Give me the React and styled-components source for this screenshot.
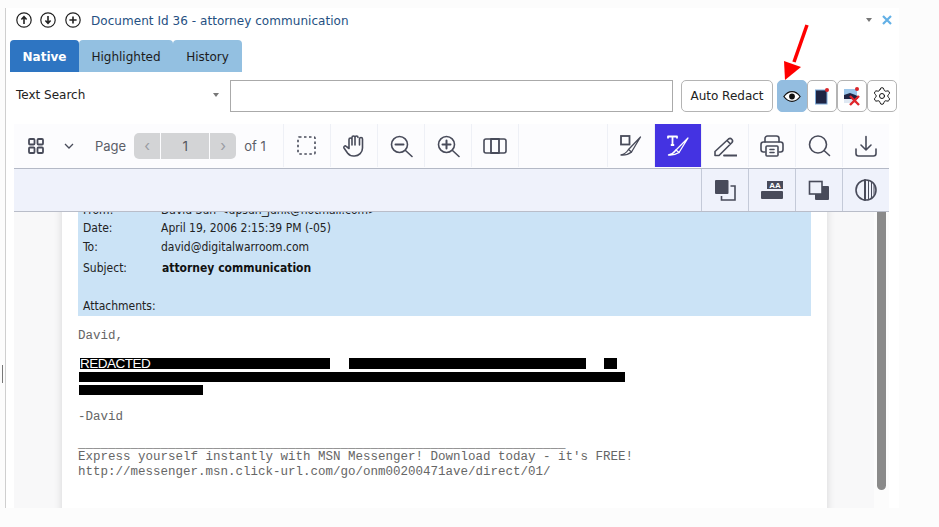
import React from "react";
import styled, { createGlobalStyle } from "styled-components";
import { Settings } from "lucide-react";

const GlobalStyle = createGlobalStyle`
  html, body {
    margin: 0;
    padding: 0;
    background: #fcfcfc;
    overflow: hidden;
  }
  * {
    box-sizing: border-box;
  }
`;

const INK = "#484b5a";

//Small helper so every toolbar glyph shares one grid
const Glyph = ({ color = INK, children }) => (
  <svg width="24" height="24" viewBox="0 0 24 24" fill="none" stroke={color} strokeWidth="1.6" strokeLinecap="round" strokeLinejoin="round">
    {children}
  </svg>
);

const RoundIcon = ({ d }) => (
  <svg width="16" height="16" viewBox="0 0 16 16" fill="none" stroke="#222" strokeWidth="1.2">
    <circle cx="8" cy="8" r="7.2" />
    <path d={d} strokeWidth="1.6" />
  </svg>
);

function App() {
  return (
    <>
      <GlobalStyle />
      <Page>
        <Handle />
        <Panel>
          <Header>
            <RoundIcons>
              <RoundIcon d="M8 12V5M5.4 7.6 8 4.6l2.6 3" />
              <RoundIcon d="M8 4v7M5.4 8.4 8 11.4l2.6-3" />
              <RoundIcon d="M8 4.4v7.2M4.4 8h7.2" />
            </RoundIcons>
            <Title>Document Id 36 - attorney communication</Title>
            <HeaderActions>
              <Caret />
              <svg width="10" height="10" viewBox="0 0 10 10" stroke="#62b0e6" strokeWidth="2.2">
                <path d="M1 1l8 8M9 1l-8 8" />
              </svg>
            </HeaderActions>
          </Header>

          <Tabs>
            <Tab $active $width={69}>Native</Tab>
            <Tab $width={94}>Highlighted</Tab>
            <Tab $width={69}>History</Tab>
          </Tabs>

          <SearchRow>
            <SearchSelect>
              Text Search
              <Caret />
            </SearchSelect>
            <SearchInput />
            <AutoRedact>Auto Redact</AutoRedact>
            <IconButton $active>
              <svg width="18" height="13" viewBox="0 0 20 14">
                <path d="M1 7c2.500-3.600 5.600-5.400 9-5.400S16.500 3.400 19 7c-2.500 3.600-5.600 5.400-9 5.400S3.500 10.600 1 7Z" fill="#fff" stroke="#111" strokeWidth="1.4" />
                <circle cx="10" cy="7" r="3.200" fill="#111" />
              </svg>
            </IconButton>
            <IconButton>
              <svg width="18" height="18" viewBox="0 0 18 18">
                <rect x="2.500" y="3" width="11.500" height="14" fill="#1f2544" stroke="#7da9d6" />
                <circle cx="14" cy="3" r="2" fill="#d9252a" />
              </svg>
            </IconButton>
            <IconButton>
              <svg width="20" height="20" viewBox="0 0 20 20">
                <rect x="2" y="3" width="13" height="6" fill="#9cc6ea" />
                <path d="M2 9l6-2 8 3v3H2Z" fill="#1f2544" />
                <rect x="2" y="13" width="13" height="4" fill="#dfe8f2" />
                <circle cx="15" cy="3" r="2" fill="#d9252a" />
                <path d="M8 10l9 9M17 10l-9 9" stroke="#e0262b" strokeWidth="2.400" />
              </svg>
            </IconButton>
            <IconButton>
              <Settings size={20} strokeWidth={1.2} color="#111" />
            </IconButton>
          </SearchRow>

          <Viewer>
            <Toolbar>
              <PagerGroup>
                <GridIcon viewBox="0 0 16 16" fill="none" stroke={INK} strokeWidth="1.8">
                  <rect x="1" y="1" width="5.500" height="5.500" rx="1" />
                  <rect x="9.500" y="1" width="5.500" height="5.500" rx="1" />
                  <rect x="1" y="9.500" width="5.500" height="5.500" rx="1" />
                  <rect x="9.500" y="9.500" width="5.500" height="5.500" rx="1" />
                </GridIcon>
                <ViewChevron viewBox="0 0 10 6" fill="none" stroke={INK} strokeWidth="1.300">
                  <path d="M1 1l4 4 4-4" />
                </ViewChevron>
                <PageLabel $left={21} $right={8}>Page</PageLabel>
                <Stepper>
                  <StepArrow>‹</StepArrow>
                  <StepValue>1</StepValue>
                  <StepArrow>›</StepArrow>
                </Stepper>
                <PageLabel $left={8}>of 1</PageLabel>
              </PagerGroup>
              <ToolCell>
                <Glyph>
                  <rect x="3" y="3" width="17" height="17" rx="1" strokeDasharray="2.500 2.500" strokeLinecap="butt" />
                </Glyph>
              </ToolCell>
              <ToolCell>
                <Glyph>
                  <path d="M17.500 11V5a1.500 1.500 0 0 1 3 0v9a8 8 0 0 1-8 8h-1c-3 0-4.500-1-6-3l-3.500-5c-.8-1.300 1-2.800 2.200-1.700L7 14.500V5.500a1.500 1.500 0 0 1 3 0V11M10 11V3.500a1.500 1.500 0 0 1 3 0V11M13 11V3.500a1.500 1.500 0 0 1 3 0" />
                </Glyph>
              </ToolCell>
              <ToolCell>
                <Glyph>
                  <circle cx="10.500" cy="10.500" r="8" />
                  <path d="M6.500 10.500h8" strokeWidth="2" />
                  <path d="M16.500 16.500 23 22.500" />
                </Glyph>
              </ToolCell>
              <ToolCell>
                <Glyph>
                  <circle cx="10.500" cy="10.500" r="8" />
                  <path d="M6.500 10.500h8M10.500 6.500v8" strokeWidth="2" />
                  <path d="M16.500 16.500 23 22.500" />
                </Glyph>
              </ToolCell>
              <ToolCell>
                <Glyph>
                  <rect x="1" y="5" width="22" height="14" rx="2" />
                  <rect x="8" y="5" width="8" height="14" strokeWidth="1.800" />
                </Glyph>
              </ToolCell>
              <Spacer />
              <ToolCell>
                <Glyph>
                  <rect x="2" y="2" width="8.500" height="8.500" strokeLinejoin="miter" strokeWidth="1.800" />
                  <path d="M21.500 3 9.500 15.500l3 2.500L21.500 3Z" strokeWidth="1.300" />
                  <path d="M9.500 15.500 Q6.500 20 2 21 Q8 21.500 12.500 18" strokeWidth="1.300" />
                </Glyph>
              </ToolCell>
              <ToolCell $selected>
                <Glyph color="#fff">
                  <path d="M2 4.500V2.500h9v2M6.500 2.500v8.500M4.800 11h3.400" strokeLinecap="butt" strokeWidth="1.800" />
                  <path d="M22 4 10 16l3 2.500L22 4Z" strokeWidth="1.300" />
                  <path d="M10 16 Q7 20 2.500 21 Q8.500 21.500 13 18.500" strokeWidth="1.300" />
                </Glyph>
              </ToolCell>
              <ToolCell>
                <Glyph>
                  <path d="M2 21.500v-4L15.500 5a2.500 2.500 0 0 1 3.500 3.500L6 21.500H2ZM14 6.500l3.500 3.500" />
                  <path d="M11 21.500h13" strokeWidth="1.800" />
                </Glyph>
              </ToolCell>
              <ToolCell>
                <Glyph>
                  <path d="M5 8V4.500A2.500 2.500 0 0 1 7.500 2h9A2.500 2.500 0 0 1 19 4.500V8" />
                  <path d="M5 18H3.500A2.500 2.500 0 0 1 1 15.500V10.500A2.500 2.500 0 0 1 3.500 8h17a2.500 2.500 0 0 1 2.500 2.500v5a2.500 2.500 0 0 1-2.500 2.500H19" />
                  <rect x="6" y="12" width="12" height="10" rx="1" />
                  <path d="M10 15.500h4M10 18.500h4" />
                </Glyph>
              </ToolCell>
              <ToolCell>
                <Glyph>
                  <circle cx="11" cy="10.500" r="8.500" />
                  <path d="M17 16.500 22.500 21.500" />
                </Glyph>
              </ToolCell>
              <ToolCell>
                <Glyph>
                  <path d="M12 2.500V16M7 11l5 5 5-5" />
                  <path d="M2 15v4.500A2.500 2.500 0 0 0 4.500 22h15a2.500 2.500 0 0 0 2.500-2.500V15" />
                </Glyph>
              </ToolCell>
            </Toolbar>

            <SubToolbar>
              <SubCell>
                <Glyph>
                  <rect x="2" y="2" width="13.500" height="14" rx="1" fill={INK} stroke="none" />
                  <path d="M17.500 8H22v14H8.500v-4" strokeLinecap="butt" strokeLinejoin="miter" />
                </Glyph>
              </SubCell>
              <SubCell>
                <svg width="24" height="24" viewBox="0 0 24 24">
                  <rect x="7" y="3" width="16" height="8" fill={INK} />
                  <text x="15" y="10" textAnchor="middle" fontFamily="'Liberation Sans', sans-serif" fontWeight="700" fontSize="8" fill="#fff">AA</text>
                  <rect x="1" y="13" width="22" height="8" rx="1" fill={INK} />
                </svg>
              </SubCell>
              <SubCell>
                <Glyph>
                  <rect x="8" y="8" width="14" height="14" rx="1" fill={INK} stroke="none" />
                  <rect x="2.500" y="3.500" width="12.500" height="12.500" fill="#eff2fb" strokeLinejoin="miter" />
                </Glyph>
              </SubCell>
              <SubCell>
                <Glyph>
                  <circle cx="12" cy="12" r="10" />
                  <path d="M11 2v20" strokeWidth="2" />
                  <path d="M14.500 3v18M17.500 4.500v15M20 7.500v9" strokeWidth="1" />
                </Glyph>
              </SubCell>
            </SubToolbar>

            <DocArea>
              <DocPane>
                <DocPage>
                  <MailHeader>
                    <MailRow $height={17}><MailLabel>From:</MailLabel><span>David Sun &lt;upsun_junk@hotmail.com&gt;</span></MailRow>
                    <MailRow $height={19}><MailLabel>Date:</MailLabel><span>April 19, 2006 2:15:39 PM (-05)</span></MailRow>
                    <MailRow $height={20}><MailLabel>To:</MailLabel><span>david@digitalwarroom.com</span></MailRow>
                    <MailRow $height={22}><MailLabel>Subject:</MailLabel><MailSubject>attorney communication</MailSubject></MailRow>
                    <MailRow $height={16} />
                    <MailRow $height={21}><MailLabel>Attachments:</MailLabel></MailRow>
                  </MailHeader>
                  <MailBody $top={13}>David,</MailBody>
                  <RedactBlock>
                    <RedactRow $height={11}>
                      <RedactBar $left={2} $width={250}>
                        <RedactText>REDACTED</RedactText>
                      </RedactBar>
                      <RedactBar $left={19} $width={237} />
                      <RedactBar $left={18} $width={13} />
                    </RedactRow>
                    <RedactRow $height={10}>
                      <RedactBar $left={1} $width={546} />
                    </RedactRow>
                    <RedactRow $height={10}>
                      <RedactBar $left={1} $width={124} />
                    </RedactRow>
                  </RedactBlock>
                  <MailBody $top={15}>-David</MailBody>
                  <MailBody $top={12}>{"_".repeat(65)}</MailBody>
                  <MailBody $top={-2}>Express yourself instantly with MSN Messenger! Download today - it's FREE!</MailBody>
                  <MailBody>http://messenger.msn.click-url.com/go/onm00200471ave/direct/01/</MailBody>
                </DocPage>
              </DocPane>
              <ScrollTrack>
                <ScrollThumb />
              </ScrollTrack>
            </DocArea>
          </Viewer>
        </Panel>

        <Pointer viewBox="0 0 40 60" width="40" height="60">
          <path d="M27 1 14 38" stroke="#ff0000" strokeWidth="3.500" />
          <path d="M4 37 21 43 5 56Z" fill="#ff0000" />
        </Pointer>
      </Page>
    </>
  );
}

const Page = styled.div`
  position: relative;
  width: 939px;
  height: 527px;
  padding: 8px 0 0 5px;
  background: #fcfcfc;
  font-family: "DejaVu Sans", sans-serif;
`;
const Handle = styled.div`
  position: absolute;
  left: 2px;
  top: 365px;
  width: 1px;
  height: 18px;
  background: #777;
`;
const Panel = styled.div`
  width: 894px;
  height: 500px;
  background: #fff;
  border-left: 1px solid #cfcfcf;
`;
const Header = styled.div`
  display: flex;
  align-items: center;
  height: 32px;
  padding: 0 7px 8px 10px;
`;
const RoundIcons = styled.div`
  display: flex;
  gap: 8px;
  svg:last-child {
    margin-left: 1px;
  }
`;
const Title = styled.div`
  margin: 1px 0 0 10px;
  font-size: 12px;
  letter-spacing: 0.05px;
  color: #255082;
`;
const HeaderActions = styled.div`
  display: flex;
  align-items: center;
  gap: 10px;
  margin-left: auto;
`;
const Caret = styled.span`
  width: 0;
  height: 0;
  border-left: 3.5px solid transparent;
  border-right: 3.5px solid transparent;
  border-top: 4px solid #777;
`;
const Tabs = styled.div`
  display: flex;
  height: 32px;
  margin-left: 4px;
`;
const Tab = styled.div`
  display: flex;
  align-items: center;
  justify-content: center;
  width: ${(p) => p.$width}px;
  padding-top: 2px;
  border-radius: 4px 4px 0 0;
  font-size: 12px;
  font-weight: ${(p) => (p.$active ? 700 : 400)};
  color: ${(p) => (p.$active ? "#fff" : "#1c1c1c")};
  background: ${(p) => (p.$active ? "#2e75c2" : "#93c0e1")};
`;
const SearchRow = styled.div`
  display: flex;
  align-items: center;
  height: 32px;
  margin-top: 8px;
  padding-left: 10px;
`;
const SearchSelect = styled.div`
  display: flex;
  align-items: center;
  justify-content: space-between;
  width: 214px;
  padding: 0 11px 2px 0;
  font-size: 12px;
  color: #222;
`;
const SearchInput = styled.div`
  width: 443px;
  height: 32px;
  border: 1px solid #aaa;
  background: #fff;
`;
const AutoRedact = styled.button`
  width: 92px;
  height: 32px;
  margin: 0 4px 0 8px;
  padding: 0;
  border: 1px solid #b4b4b4;
  border-radius: 5px;
  background: #fff;
  font-family: inherit;
  font-size: 12px;
  color: #222;
`;
const IconButton = styled.button`
  display: flex;
  align-items: center;
  justify-content: center;
  width: 30px;
  height: 32px;
  padding: 0;
  border: 1px solid ${(p) => (p.$active ? "#93bde0" : "#b4b4b4")};
  border-radius: 5px;
  background: ${(p) => (p.$active ? "#93bde0" : "#fff")};
`;
const Viewer = styled.div`
  display: flex;
  flex-direction: column;
  width: 875px;
  height: 384px;
  margin: 12px 0 0 8px;
`;
const Toolbar = styled.div`
  display: flex;
  flex: none;
  height: 45px;
  padding-bottom: 1px;
  background: #fcfcfe;
  border-bottom: 1px solid #b4b9c6;
`;
const PagerGroup = styled.div`
  display: flex;
  align-items: center;
  width: 269px;
  padding-left: 14px;
`;
const GridIcon = styled.svg`
  width: 16px;
  height: 16px;
`;
const ViewChevron = styled.svg`
  width: 10px;
  height: 6px;
  margin-left: 20px;
`;
const PageLabel = styled.span`
  margin: 0 ${(p) => p.$right || 0}px 0 ${(p) => p.$left || 0}px;
  font-family: Inter, sans-serif;
  font-size: 13px;
  color: #5b5e68;
`;
const Stepper = styled.div`
  display: flex;
  width: 102px;
  height: 26px;
  gap: 1px;
  border-radius: 5px;
  overflow: hidden;
`;
const StepArrow = styled.div`
  display: flex;
  flex: none;
  align-items: center;
  justify-content: center;
  width: 26px;
  background: #d3d4d6;
  font-family: Inter, sans-serif;
  font-size: 15px;
  color: #9a9ca3;
`;
const StepValue = styled(StepArrow)`
  flex: 1;
  width: auto;
  font-size: 13.5px;
  color: #55585f;
`;
const ToolCell = styled.div`
  display: flex;
  flex: none;
  align-items: center;
  justify-content: center;
  width: 47px;
  border-left: 1px solid #eef0f6;
  background: ${(p) => (p.$selected ? "#4433e2" : "transparent")};
`;
const Spacer = styled.div`
  flex: 1;
  border-left: 1px solid #eef0f6;
`;
const SubToolbar = styled.div`
  display: flex;
  flex: none;
  justify-content: flex-end;
  height: 43px;
  background: #eff2fb;
  border-bottom: 1px solid #b9bdc9;
`;
const SubCell = styled.div`
  display: flex;
  align-items: center;
  justify-content: center;
  width: 47px;
  border-left: 1px solid #c4cad8;
`;
const DocArea = styled.div`
  display: flex;
  flex: 1;
  min-height: 0;
`;
const DocPane = styled.div`
  flex: 1;
  padding-left: 48px;
  background: #f8f8f9;
  overflow: hidden;
`;
const DocPage = styled.div`
  width: 765px;
  height: 400px;
  margin-top: -11px;
  padding: 0 16px;
  background: #fff;
  box-shadow: 0 0 8px rgba(0, 0, 0, 0.14);
`;
const MailHeader = styled.div`
  height: 115px;
  padding-left: 5px;
  background: #cbe3f6;
  font-family: "DejaVu Sans", sans-serif;
  font-stretch: condensed;
  font-size: 12px;
  color: #222;
`;
const MailRow = styled.div`
  display: flex;
  align-items: center;
  height: ${(p) => p.$height}px;
`;
const MailLabel = styled.span`
  width: 78px;
`;
const MailSubject = styled.b`
  margin-left: 1px;
  font-weight: 700;
  color: #111;
`;
const MailBody = styled.div`
  height: 15px;
  margin-top: ${(p) => p.$top || 0}px;
  font-family: "Liberation Mono", monospace;
  font-size: 12.5px;
  line-height: 15px;
  white-space: pre;
  color: #666;
`;
const RedactBlock = styled.div`
  display: flex;
  flex-direction: column;
  gap: 3px;
  margin-top: 14px;
`;
const RedactRow = styled.div`
  display: flex;
  height: ${(p) => p.$height}px;
`;
const RedactBar = styled.div`
  width: ${(p) => p.$width}px;
  margin-left: ${(p) => p.$left}px;
  background: #000;
  overflow: hidden;
`;
const RedactText = styled.div`
  margin-top: -1px;
  font-family: "Liberation Sans", sans-serif;
  font-size: 13.5px;
  line-height: 14px;
  letter-spacing: -0.5px;
  color: #fff;
`;
const ScrollTrack = styled.div`
  flex: none;
  width: 15px;
  padding-left: 3px;
  background: #fcfcfc;
`;
const ScrollThumb = styled.div`
  width: 9px;
  height: 278px;
  border-radius: 0 0 5px 5px;
  background: #8a8a8a;
`;
const Pointer = styled.svg`
  position: absolute;
  left: 780px;
  top: 24px;
`;

export default App;
